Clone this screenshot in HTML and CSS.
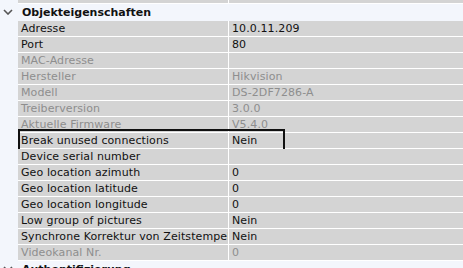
FILE: index.html
```html
<!DOCTYPE html>
<html lang="de">
<head>
    <meta charset="UTF-8">
    <title>Objekteigenschaften</title>
    <link rel="stylesheet" href="styles.css">
</head>
<body>
    <div class="props">
        <div class="row">
            <div class="name">Name</div>
            <div class="value">1</div>
        </div>

        <div class="group">
            <svg class="chevron" width="10" height="6" viewBox="0 0 10 6"><path d="M1 1 L5 5 L9 1" fill="none" stroke="#555" stroke-width="1.6"/></svg>
            <span>Objekteigenschaften</span>
        </div>

        <div class="row"><div class="name">Adresse</div><div class="value">10.0.11.209</div></div>
        <div class="row"><div class="name">Port</div><div class="value">80</div></div>
        <div class="row off"><div class="name">MAC-Adresse</div><div class="value"></div></div>
        <div class="row off"><div class="name">Hersteller</div><div class="value">Hikvision</div></div>
        <div class="row off"><div class="name">Modell</div><div class="value">DS-2DF7286-A</div></div>
        <div class="row off"><div class="name">Treiberversion</div><div class="value">3.0.0</div></div>
        <div class="row off"><div class="name">Aktuelle Firmware</div><div class="value">V5.4.0</div></div>
        <div class="row marked">
            <div class="name">Break unused connections</div>
            <div class="value">Nein</div>
            <div class="mark"></div>
        </div>
        <div class="row"><div class="name">Device serial number</div><div class="value"></div></div>
        <div class="row"><div class="name">Geo location azimuth</div><div class="value">0</div></div>
        <div class="row"><div class="name">Geo location latitude</div><div class="value">0</div></div>
        <div class="row"><div class="name">Geo location longitude</div><div class="value">0</div></div>
        <div class="row"><div class="name">Low group of pictures</div><div class="value">Nein</div></div>
        <div class="row"><div class="name">Synchrone Korrektur von Zeitstempel</div><div class="value">Nein</div></div>
        <div class="row off"><div class="name">Videokanal Nr.</div><div class="value">0</div></div>

        <div class="group">
            <svg class="chevron" width="10" height="6" viewBox="0 0 10 6"><path d="M1 1 L5 5 L9 1" fill="none" stroke="#555" stroke-width="1.6"/></svg>
            <span>Authentifizierung</span>
        </div>
    </div>
</body>
</html>
```

FILE: styles.css
```css
body {
    margin: 0;
    background-color: #f3f6fc;
    font-family: "DejaVu Sans", Verdana, sans-serif;
    font-size: 11px;
    letter-spacing: 0.1px;
    color: #111;
    overflow: hidden;
}
.props {
    margin-top: -12px;
}
.row {
    position: relative;
    display: flex;
    margin-left: 18px;
    height: 15px;
    line-height: 15px;
    border-bottom: 1px solid #fff;
}
.name {
    width: 207px;
    padding-left: 3px;
    background-color: #d4d4d4;
    border-right: 1px solid #fff;
    white-space: nowrap;
    overflow: hidden;
}
.value {
    flex: 1;
    padding-left: 3px;
    background-color: #d4d4d4;
    white-space: nowrap;
}
.row.off {
    color: #8e8e8e;
}
.mark {
    position: absolute;
    left: 0;
    top: -4px;
    width: 263px;
    height: 18px;
    border: 2px solid #111;
}
.group {
    display: flex;
    align-items: center;
    height: 16px;
    font-weight: bold;
    letter-spacing: 0;
    border-bottom: 1px solid #f3f6fc;
}
.chevron {
    margin-left: 3px;
    margin-right: 9px;
}
```
